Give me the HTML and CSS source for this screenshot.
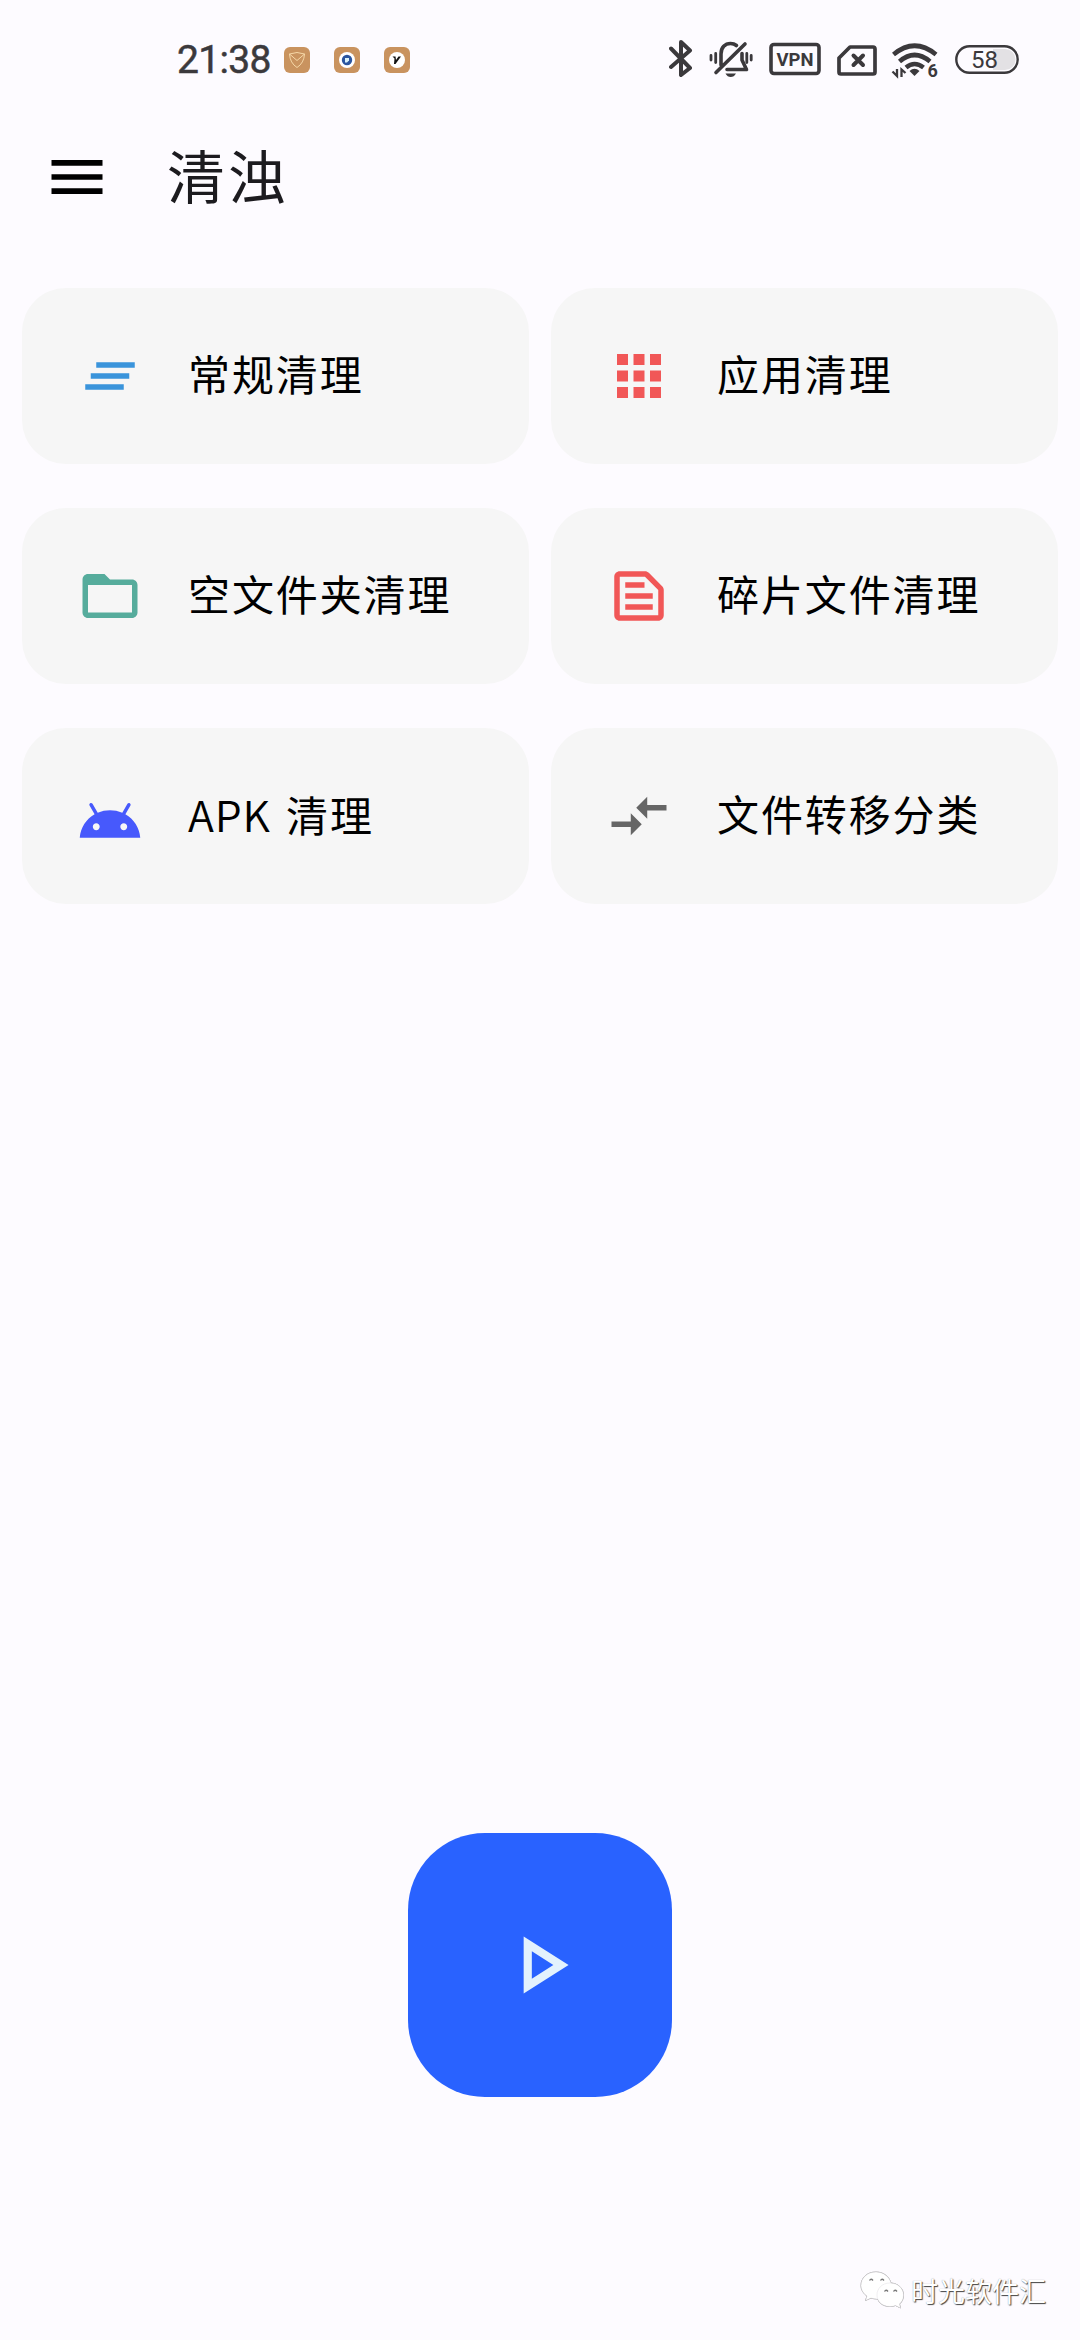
FILE: index.html
```html
<!DOCTYPE html>
<html lang="zh-CN">
<head>
<meta charset="utf-8">
<title>清浊</title>
<link rel="stylesheet" href="styles.css">
</head>
<body>
<div class="screen">
  <header class="status">
    <span class="clock">21:38</span>
    <div class="notices">
      <svg class="notice" viewBox="0 0 26 26"><rect width="26" height="26" rx="6" fill="#c9935f"/><path d="M5.500 7Q13 4 20.500 7Q20 16 13 20.500Q6 16 5.500 7L13 13.500L20.500 7" fill="none" stroke="#f6d8a8" stroke-width="1"/></svg>
      <svg class="notice" viewBox="0 0 26 26"><rect width="26" height="26" rx="6" fill="#c9935f"/><circle cx="13" cy="13" r="8" fill="#fff"/><circle cx="13" cy="13" r="5.200" fill="#2a559f"/><path d="M11 11h4v2.500l-2 2h-2z" fill="#d9f2fb"/></svg>
      <svg class="notice" viewBox="0 0 26 26"><rect width="26" height="26" rx="6" fill="#c9935f"/><circle cx="13" cy="13" r="8" fill="#fff"/><path d="M8.500 9.500h3l.5 3.500 2.500-3.500h2.500l-5.500 7.500h-1.500l.5-5.500z" fill="#111"/></svg>
    </div>
    <div class="signals">
      <svg class="bluetooth" viewBox="0 0 24 44"><path d="M2 10.500L21 30L12 37V4L21 12.500L2 29" fill="none" stroke="#3b393c" stroke-width="4" stroke-linejoin="round" stroke-linecap="round"/></svg>
      <svg class="muted" viewBox="0 0 44 44" fill="none" stroke="#3b393c" stroke-width="3.600" stroke-linecap="round" stroke-linejoin="round"><path d="M12 27V16C12 9.500 16 5.500 21.500 5.500C24 5.500 26 6.300 27.500 7.500M33 15.500V22L37.500 31.500H18M36 6L7 34.500"/><path d="M16.500 35.500H27Q25 39 21.700 39T16.500 35.500z" fill="#3b393c" stroke="none"/><path d="M2 17.500V22M6.700 15.500V24.500M37.800 15.500V24.500M42.200 17.500V22" stroke-width="2.800"/></svg>
      <svg class="vpn" viewBox="0 0 52 44"><rect x="2" y="6.500" width="48" height="29" rx="3" fill="none" stroke="#3b393c" stroke-width="3.600"/><text x="26" y="27.500" text-anchor="middle" textLength="37" lengthAdjust="spacingAndGlyphs">VPN</text></svg>
      <svg class="sim" viewBox="0 0 40 44" fill="none" stroke="#3b393c" stroke-width="3.700" stroke-linejoin="round" stroke-linecap="round"><path d="M13 9H36Q38 9 38 11V34Q38 36 36 36H4Q2 36 2 34V20z"/><path d="M16.500 17.500L26 27M26 17.500L16.500 27" stroke-width="4"/></svg>
      <svg class="wifi" viewBox="0 0 48 44" fill="none" stroke="#3b393c" stroke-width="4.600"><path d="M2.500 16.500Q23.500 -1 45 16.500M8.500 23.500Q23.500 10.500 39 23.500M15 29.500Q23.500 22.500 32.500 29.500"/><path d="M18.500 33Q23.500 28.500 28.500 33L23.500 38z" fill="#3b393c" stroke="none"/><path d="M6 31V38L1.500 33.500M10.500 39V31.500L14.500 35" stroke-width="2.300"/><text x="36.500" y="39" stroke="none">6</text></svg>
      <svg class="battery" viewBox="0 0 64 44"><path d="M38 11H50A10.500 10.500 0 0 1 50 32H38z" fill="#e3e1e4"/><rect x="1.300" y="8.300" width="61.400" height="26.400" rx="13.200" fill="none" stroke="#3b393c" stroke-width="2.400"/><text x="29.500" y="29.800" text-anchor="middle">58</text></svg>
    </div>
  </header>

  <nav class="appbar">
    <svg class="menu" viewBox="0 0 24 24"><path d="M3 18h18v-2H3v2zm0-5h18v-2H3v2zm0-7v2h18V6H3z"/></svg>
    <h1 class="title">清浊</h1>
  </nav>

  <main class="cards">
    <div class="card"><svg class="icon sky" viewBox="0 0 24 24"><path d="M5 13h14v-2H5v2zm-2 4h14v-2H3v2zM7 7v2h14V7H7z"/></svg><span class="label">常规清理</span></div>
    <div class="card"><svg class="icon red" viewBox="0 0 24 24"><path d="M4 8h4V4H4v4zm6 12h4v-4h-4v4zm-6 0h4v-4H4v4zm0-6h4v-4H4v4zm6 0h4v-4h-4v4zm6-10v4h4V4h-4zm-6 4h4V4h-4v4zm6 6h4v-4h-4v4zm0 6h4v-4h-4v4z"/></svg><span class="label">应用清理</span></div>
    <div class="card"><svg class="icon teal" viewBox="0 0 24 24"><path d="M20 6h-8l-2-2H4c-1.100 0-1.990.9-1.990 2L2 18c0 1.100.9 2 2 2h16c1.100 0 2-.9 2-2V8c0-1.100-.9-2-2-2zm0 12H4V8h16v10z"/></svg><span class="label">空文件夹清理</span></div>
    <div class="card"><svg class="icon red" viewBox="0 0 24 24"><path d="M14.170 5L19 9.830V19H5V5h9.170M14.170 3H5c-1.100 0-2 .9-2 2v14c0 1.100.9 2 2 2h14c1.100 0 2-.9 2-2V9.830c0-.53-.21-1.040-.59-1.410l-4.830-4.830C15.210 3.210 14.700 3 14.170 3zM7 15h10v2H7v-2zM7 11h10v2H7v-2zM7 7h7v2H7V7z"/></svg><span class="label">碎片文件清理</span></div>
    <div class="card"><svg class="icon indigo" viewBox="0 -1.900 24 24"><path d="M17.600 9.480l1.840-3.180c.16-.31.04-.69-.26-.85-.29-.15-.65-.06-.83.22l-1.880 3.240c-2.860-1.210-6.080-1.210-8.940 0L5.650 5.670c-.19-.29-.58-.38-.87-.2-.28.18-.37.54-.22.83L6.400 9.480C3.300 11.250 1.280 14.440 1 18h22c-.28-3.560-2.300-6.750-5.400-8.520zM7 15.250c-.69 0-1.250-.56-1.250-1.250s.56-1.250 1.250-1.250 1.250.56 1.250 1.250-.56 1.250-1.250 1.250zm10 0c-.69 0-1.250-.56-1.250-1.250s.56-1.250 1.250-1.250 1.250.56 1.250 1.250-.56 1.250-1.250 1.250z"/></svg><span class="label"><span class="latin">APK</span> 清理</span></div>
    <div class="card"><svg class="icon gray" viewBox="0 0 24 24"><path d="M9.010 14H2v2h7.010v3L13 15l-3.990-4v3zm5.980-1v-3H22V8h-7.010V5L11 9l3.990 4z"/></svg><span class="label">文件转移分类</span></div>
  </main>

  <button class="start" aria-label="开始">
    <svg class="play" viewBox="0 0 24 24"><path d="M10 8.640L15.270 12 10 15.360V8.640M8 5v14l11-7L8 5z"/></svg>
  </button>

  <footer class="credit">
    <svg class="wechat" viewBox="0 0 46 40" stroke-linejoin="round"><g class="bubble"><path d="M16 1C7 1 1 7 1 14.500C1 19 3.500 22.500 7 25L5.500 29.500L11 27Q14 28 17 28A14 12 0 0 0 31 12C29 5 23 1 16 1z"/><path d="M30 12C22 12 17 17.500 17 24S22 35.500 30 35.500Q33 35.500 35.500 34.500L40.500 37L39.500 33C42 31 43.500 28 43.500 24C43.500 17.500 38 12 30 12z"/></g><path class="eyes" d="M9.500 9.500q1.500-2.500 3.500 0M20.500 9.500q1.500-2.500 3.500 0M24.500 20.500q1.500-2.500 3.500 0M33.500 20.500q1.500-2.500 3.500 0"/></svg>
    <span>时光软件汇</span>
  </footer>
</div>
</body>
</html>
```
FILE: styles.css
```css
* {
  box-sizing: border-box;
}

body {
  margin: 0;
  background: #fdfbff;
  font-family: "Noto Sans CJK SC", sans-serif;
}

svg {
  display: block;
  flex: none;
}

.screen {
  width: 1080px;
  height: 2340px;
  display: flex;
  flex-direction: column;
}

.status {
  height: 120px;
  display: flex;
  align-items: center;
  padding-left: 177px;
  color: #3b393c;
}

.clock {
  width: 107px;
  font: 400 39px/44px Roboto, sans-serif;
  letter-spacing: -0.7px;
  -webkit-text-stroke: 0.5px #3b393c;
}

.notices {
  display: flex;
  gap: 24px;
}

.notice {
  width: 26px;
  height: 26px;
}

.signals {
  display: flex;
  gap: 16px;
  margin-left: 259px;
}

.signals svg {
  height: 44px;
}

.signals text {
  fill: #3b393c;
  font-family: Roboto, sans-serif;
}

.bluetooth {
  width: 24px;
}

.muted {
  width: 44px;
}

.vpn {
  width: 52px;
}

.sim {
  width: 40px;
}

.wifi {
  width: 48px;
  margin-left: -2px;
}

.battery {
  width: 64px;
}

.vpn text {
  font-size: 18.5px;
  font-weight: 700;
}

.wifi text {
  font-size: 18px;
  font-weight: 700;
}

.battery text {
  font-size: 24px;
}

.appbar {
  height: 113px;
  display: flex;
  align-items: center;
  padding-left: 43px;
}

.menu {
  width: 68px;
  height: 68px;
}

.title {
  margin: 0 0 0 56px;
  padding-bottom: 6px;
  font-size: 58px;
  font-weight: 400;
  line-height: 84px;
  letter-spacing: 3px;
  color: #1c1b1f;
}

.cards {
  display: grid;
  grid-template-columns: 1fr 1fr;
  grid-auto-rows: 176px;
  gap: 44px 22px;
  padding: 55px 22px 0;
}

.card {
  display: flex;
  align-items: center;
  gap: 45px;
  padding-left: 55px;
  border-radius: 44px;
  background: #f6f6f6;
}

.icon {
  width: 66px;
  height: 66px;
  fill: currentColor;
}

.sky {
  color: #3a94db;
}

.red {
  color: #f15757;
}

.teal {
  color: #56ac9c;
}

.indigo {
  color: #4759fc;
}

.gray {
  color: #666;
}

.label {
  padding-bottom: 6px;
  font-size: 42px;
  line-height: 60px;
  letter-spacing: 1.9px;
  word-spacing: 4px;
  color: #000;
}

.latin {
  font-size: 43px;
  font-weight: 350;
  letter-spacing: 0.8px;
}

.start {
  width: 264px;
  height: 264px;
  margin: 929px auto 0;
  padding: 0;
  display: flex;
  align-items: center;
  justify-content: center;
  border: 0;
  border-radius: 77px;
  background: #2962ff;
}

.play {
  width: 98px;
  height: 98px;
  fill: #e3f2fd;
}

.credit {
  margin: auto 34px 29px auto;
  display: flex;
  align-items: center;
  gap: 5px;
  font-size: 27px;
  line-height: 40px;
  color: #fff;
  text-shadow: 1px 1px 1px #444, 0 0 1px #999;
}

.wechat {
  width: 46px;
  height: 40px;
  fill: #fff;
  filter: drop-shadow(0.6px 0.8px 0.5px #555);
}

.bubble {
  stroke: #e6e4e8;
  stroke-width: 0.6;
}

.eyes {
  fill: none;
  stroke: #777;
  stroke-width: 1.3;
}
```
